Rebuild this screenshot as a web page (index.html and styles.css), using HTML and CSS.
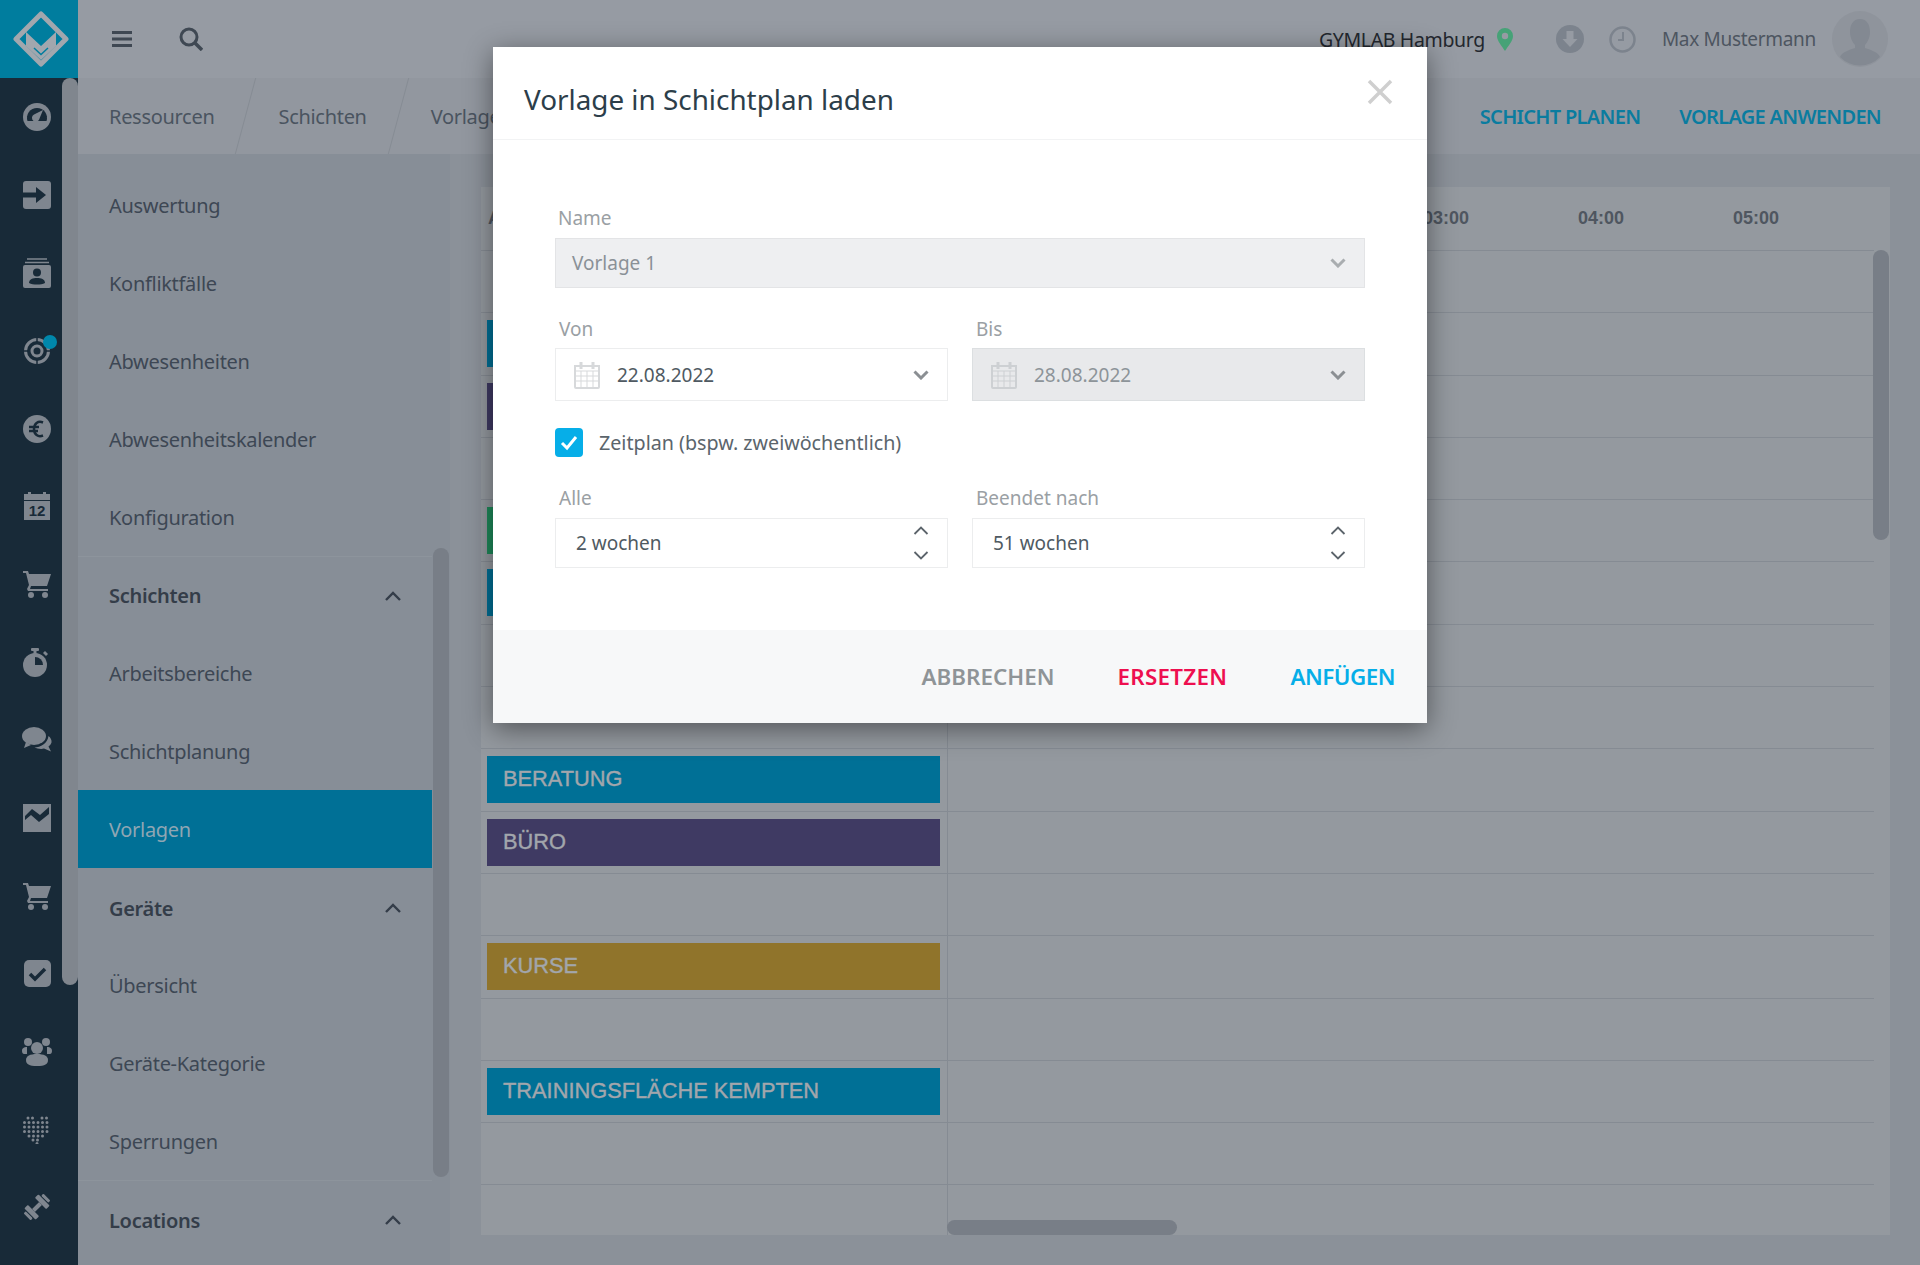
FILE: index.html
```html
<!DOCTYPE html>
<html lang="de">
<head>
    <meta charset="UTF-8">
    <title>Vorlagen</title>
    <link rel="stylesheet" href="styles.css">
</head>
<body>
<div class="app">
    <!-- Icon rail -->
    <nav class="rail">
        <div class="logo">
            <svg width="56" height="56" viewBox="0 0 56 56"><path d="M28 3 53 28 28 53 3 28Z" fill="none" stroke="#a2a7ae" stroke-width="5" stroke-linejoin="round"/><path d="M13 21 28 35 43 21V35L28 49 13 35Z" fill="#a2a7ae"/><path d="M21 37 28 43.5 35 37" fill="none" stroke="#007d9e" stroke-width="1.5"/></svg>
        </div>
        <div class="rail-thumb"></div>
        <div class="rail-item"><svg width="28" height="28" viewBox="0 0 28 28"><circle cx="14" cy="14" r="14" class="f"/><path d="M4.5 18a10 10 0 1 1 19 0Z" class="k"/><path d="M20 7l-3.500 8.500a3.800 3.800 0 1 1-5.500-4Z" class="f"/></svg></div>
        <div class="rail-item"><svg width="28" height="28" viewBox="0 0 28 28"><rect width="28" height="28" rx="3" class="f"/><path d="M0 11.500h13V6l10 8-10 8v-5.500H0Z" class="k"/></svg></div>
        <div class="rail-item"><svg width="28" height="30" viewBox="0 0 28 30"><path d="M4 1h20M2 4.500h24" stroke="#7f868f" stroke-width="1.5" fill="none"/><rect y="7" width="28" height="23" rx="2" class="f"/><circle cx="14" cy="14.5" r="4" class="k"/><path d="M6 25c0-4 4-5 8-5s8 1 8 5c-4 2-12 2-16 0Z" class="k"/></svg></div>
        <div class="rail-item"><svg width="28" height="28" viewBox="0 0 28 28"><circle cx="14" cy="14" r="11.5" fill="none" stroke="#7f868f" stroke-width="3"/><circle cx="14" cy="14" r="5" fill="none" stroke="#7f868f" stroke-width="3"/><path d="M0 14h5M23 14h5M14 0v5M14 23v5" stroke="#182a38" stroke-width="1.5"/></svg><span class="rail-dot"></span></div>
        <div class="rail-item"><svg width="28" height="28" viewBox="0 0 28 28"><circle cx="14" cy="14" r="14" class="f"/><path d="M20 7.500c-5-2-9 1-9 6.500s4 8.500 9 6.500M6 12h10M6 16h9" fill="none" class="d" stroke-width="2.5"/></svg></div>
        <div class="rail-item"><svg width="28" height="30" viewBox="0 0 28 30"><path d="M1 3h4V1h3v2h12V1h3v2h4v6H1Z" class="f"/><rect x="1" y="10" width="26" height="19" class="f"/><text x="14" y="25" class="cal-num">12</text></svg></div>
        <div class="rail-item"><svg width="30" height="30" viewBox="0 0 30 30"><path d="M1 2h5l1 3h22l-4 12H9l-1 3h18v2H6l-1-2 2-4L4 4H1Z" class="f"/><circle cx="9" cy="26" r="3" class="f"/><circle cx="23" cy="26" r="3" class="f"/></svg></div>
        <div class="rail-item"><svg width="28" height="30" viewBox="0 0 28 30"><circle cx="12" cy="18" r="12" class="f"/><rect x="8" y="1" width="8" height="3" rx="1" class="f"/><rect x="10.5" y="3" width="3" height="4" class="f"/><path d="m22 4 3 3-2 2-3-3Z" class="f"/><path d="M12 10v8h8a8 8 0 0 0-8-8Z" class="k"/></svg></div>
        <div class="rail-item"><svg width="30" height="26" viewBox="0 0 30 26"><ellipse cx="12" cy="9" rx="12" ry="9" class="f"/><path d="m4 15-2 6 7-3Z" class="f"/><path d="M26.500 9c2 1.500 3.500 4 3 6.500-.5 2-2 3-3 4l2.500 5-7-3c-3 1-7 0-9.500-1 6 0 13-4 14-11.500Z" class="f"/></svg></div>
        <div class="rail-item"><svg width="28" height="28" viewBox="0 0 28 28"><rect width="28" height="28" class="f"/><path d="M2 12v4l6-5 8 7 10-8V3l-9 8-8-6Z" class="k"/></svg></div>
        <div class="rail-item"><svg width="30" height="30" viewBox="0 0 30 30"><path d="M1 2h5l1 3h22l-4 12H9l-1 3h18v2H6l-1-2 2-4L4 4H1Z" class="f"/><circle cx="9" cy="26" r="3" class="f"/><circle cx="23" cy="26" r="3" class="f"/></svg></div>
        <div class="rail-item"><svg width="27" height="27" viewBox="0 0 27 27"><rect width="27" height="27" rx="5" class="f"/><path d="m6 14 5 5 10-10" fill="none" class="d" stroke-width="3.5"/></svg></div>
        <div class="rail-item"><svg width="30" height="28" viewBox="0 0 30 28"><circle cx="6" cy="4" r="4" class="f"/><circle cx="24" cy="4" r="4" class="f"/><path d="M0 13c0-3 2-4 5-4v7H2c-1 0-2-1-2-3ZM30 13c0-3-2-4-5-4v7h3c1 0 2-1 2-3Z" class="f"/><circle cx="15" cy="10" r="6" class="f"/><path d="M4 22c0-4 4-6 11-6s11 2 11 6c0 4-3 6-11 6S4 26 4 22Z" class="f"/></svg></div>
        <div class="rail-item"><svg width="28" height="28" viewBox="0 0 28 28"><g fill="none" stroke="#7f868f" stroke-width="3" stroke-linecap="round" stroke-dasharray="0 4.5"><path d="M5 2h6M19 2h6"/><path d="M1.5 6.500h25"/><path d="M1.5 11h25"/><path d="M1.5 15.500h25"/><path d="M6 20h16"/><path d="M10 24h8"/><path d="M14 27.500h1"/></g></svg></div>
        <div class="rail-item"><svg width="28" height="28" viewBox="0 0 28 28"><g transform="rotate(-45 14 14)"><rect x="9" y="12" width="10" height="4" class="f"/><rect x="4" y="6" width="5" height="16" rx="1" class="f"/><rect x="19" y="6" width="5" height="16" rx="1" class="f"/><rect x="0" y="9" width="3" height="10" rx="1" class="f"/><rect x="25" y="9" width="3" height="10" rx="1" class="f"/></g></svg></div>
    </nav>

    <div class="main">
        <header class="topbar">
            <div class="topbar-left">
                <svg width="20" height="16" viewBox="0 0 20 16"><path d="M0 1.500h20M0 8h20M0 14.500h20" stroke="#3f4853" stroke-width="3"/></svg>
                <svg width="24" height="24" viewBox="0 0 24 24"><circle cx="10" cy="10" r="8" fill="none" stroke="#3f4853" stroke-width="3"/><path d="m16 16 7 7" stroke="#3f4853" stroke-width="3.5"/></svg>
            </div>
            <div class="topbar-right">
                <span class="location">GYMLAB Hamburg</span>
                <svg class="pin" width="16" height="23" viewBox="0 0 16 23"><path d="M8 0a8 8 0 0 1 8 8c0 5-5 10-8 15C5 18 0 13 0 8a8 8 0 0 1 8-8Z" fill="#46a277"/><circle cx="8" cy="8" r="3.2" fill="#969ba3"/></svg>
                <svg class="ic-download" width="28" height="28" viewBox="0 0 28 28"><circle cx="14" cy="14" r="14" fill="#7c838d"/><path d="M10.500 6h7v8h4L14 22l-7.500-8h4Z" fill="#969ba3"/></svg>
                <svg class="ic-clock" width="27" height="27" viewBox="0 0 27 27"><circle cx="13.5" cy="13.5" r="12" fill="none" stroke="#7c838d" stroke-width="2.5"/><path d="M14 6v8H9" fill="none" stroke="#7c838d" stroke-width="2"/></svg>
                <span class="user-name">Max Mustermann</span>
                <svg class="avatar" width="56" height="56" viewBox="0 0 56 56"><circle cx="28" cy="28" r="28" fill="#8f949c"/><path d="M28 8c7 0 10 6 10 13 0 6-3 11-5 13v3c6 2 13 4 15 9a28 28 0 0 1-40 0c2-5 9-7 15-9v-3c-2-2-5-7-5-13 0-7 3-13 10-13Z" fill="#838992"/></svg>
            </div>
        </header>

        <div class="subbar">
            <div class="crumbs">
                <a class="crumb">Ressourcen</a>
                <a class="crumb">Schichten</a>
                <a class="crumb">Vorlagen</a>
            </div>
            <div class="actions">
                <a>SCHICHT PLANEN</a>
                <a>VORLAGE ANWENDEN</a>
            </div>
        </div>

        <div class="workspace">
            <aside class="sidebar">
                <div class="side-thumb"></div>
                <a class="side-item">Auswertung</a>
                <a class="side-item">Konfliktfälle</a>
                <a class="side-item">Abwesenheiten</a>
                <a class="side-item">Abwesenheitskalender</a>
                <a class="side-item">Konfiguration</a>
                <div class="side-group">
                    <div class="side-head">Schichten <svg width="16" height="10" viewBox="0 0 16 10"><path d="M1 9l7-7 7 7" class="chev"/></svg></div>
                    <a class="side-item">Arbeitsbereiche</a>
                    <a class="side-item">Schichtplanung</a>
                    <a class="side-item active">Vorlagen</a>
                </div>
                <div class="side-group plain">
                    <div class="side-head">Geräte <svg width="16" height="10" viewBox="0 0 16 10"><path d="M1 9l7-7 7 7" class="chev"/></svg></div>
                    <a class="side-item">Übersicht</a>
                    <a class="side-item">Geräte-Kategorie</a>
                    <a class="side-item">Sperrungen</a>
                </div>
                <div class="side-group">
                    <div class="side-head">Locations <svg width="16" height="10" viewBox="0 0 16 10"><path d="M1 9l7-7 7 7" class="chev"/></svg></div>
                </div>
            </aside>

            <section class="content">
                <div class="plan">
                    <div class="plan-head">
                        <div class="plan-name">Arbeitsbereiche</div>
                        <div class="plan-times">
                            <span>00:00</span><span>01:00</span><span>02:00</span><span>03:00</span><span>04:00</span><span>05:00</span>
                        </div>
                    </div>
                    <div class="row"><div class="row-name"></div></div>
                    <div class="row"><div class="row-name"><div class="bar blue"></div></div></div>
                    <div class="row"><div class="row-name"><div class="bar purple"></div></div></div>
                    <div class="row"><div class="row-name"></div></div>
                    <div class="row"><div class="row-name"><div class="bar green"></div></div></div>
                    <div class="row"><div class="row-name"><div class="bar blue"></div></div></div>
                    <div class="row"><div class="row-name"></div></div>
                    <div class="row"><div class="row-name"></div></div>
                    <div class="row"><div class="row-name"><div class="bar blue">BERATUNG</div></div></div>
                    <div class="row"><div class="row-name"><div class="bar purple">BÜRO</div></div></div>
                    <div class="row"><div class="row-name"></div></div>
                    <div class="row"><div class="row-name"><div class="bar gold">KURSE</div></div></div>
                    <div class="row"><div class="row-name"></div></div>
                    <div class="row"><div class="row-name"><div class="bar blue">TRAININGSFLÄCHE KEMPTEN</div></div></div>
                    <div class="row"><div class="row-name"></div></div>
                    <div class="row"><div class="row-name"></div></div>
                    <div class="plan-vthumb"></div>
                    <div class="plan-hthumb"></div>
                </div>
            </section>
        </div>
    </div>
</div>

<!-- Dialog -->
<div class="modal">
    <div class="modal-head">
        <h2>Vorlage in Schichtplan laden</h2>
        <svg width="26" height="26" viewBox="0 0 26 26"><path d="M2 2l22 22M24 2 2 24" stroke="#cfcfcf" stroke-width="3.5"/></svg>
    </div>
    <div class="modal-body">
        <label class="label">Name</label>
        <div class="input locked name-input">
            <span>Vorlage 1</span>
            <svg width="16" height="10" viewBox="0 0 16 10"><path d="M1.5 1.500 8 8l6.500-6.500" class="sel-chev light"/></svg>
        </div>
        <div class="two-col dates">
            <div>
                <label class="label short">Von</label>
                <div class="input date">
                    <svg class="cal" width="26" height="28" viewBox="0 0 26 28"><use href="#cal-icon"/></svg>
                    <span class="date-text">22.08.2022</span>
                    <svg width="16" height="10" viewBox="0 0 16 10"><path d="M1.5 1.500 8 8l6.500-6.500" class="sel-chev"/></svg>
                </div>
            </div>
            <div>
                <label class="label short">Bis</label>
                <div class="input date disabled">
                    <svg class="cal" width="26" height="28" viewBox="0 0 26 28"><use href="#cal-icon"/></svg>
                    <span class="date-text">28.08.2022</span>
                    <svg width="16" height="10" viewBox="0 0 16 10"><path d="M1.5 1.500 8 8l6.500-6.500" class="sel-chev"/></svg>
                </div>
            </div>
        </div>
        <div class="check-row">
            <span class="check"><svg width="18" height="16" viewBox="0 0 18 16"><path d="M2 8l5 5 9-11" fill="none" stroke="#fff" stroke-width="3"/></svg></span>
            <span>Zeitplan (bspw. zweiwöchentlich)</span>
        </div>
        <div class="two-col">
            <div>
                <label class="label wide">Alle</label>
                <div class="input spin">
                    <span>2 wochen</span>
                    <svg width="16" height="34" viewBox="0 0 16 34"><path d="M1.5 8 8 1.500 14.500 8M1.500 26 8 32.500 14.500 26" fill="none" stroke="#5c646b" stroke-width="1.8"/></svg>
                </div>
            </div>
            <div>
                <label class="label wide">Beendet nach</label>
                <div class="input spin">
                    <span>51 wochen</span>
                    <svg width="16" height="34" viewBox="0 0 16 34"><path d="M1.5 8 8 1.500 14.500 8M1.500 26 8 32.500 14.500 26" fill="none" stroke="#5c646b" stroke-width="1.8"/></svg>
                </div>
            </div>
        </div>
    </div>
    <div class="modal-foot">
        <a class="btn-cancel">ABBRECHEN</a>
        <a class="btn-replace">ERSETZEN</a>
        <a class="btn-append">ANFÜGEN</a>
    </div>
</div>

<svg class="defs" width="0" height="0">
    <symbol id="cal-icon" viewBox="0 0 26 28">
        <path d="M1 5h24v21a1 1 0 0 1-1 1H2a1 1 0 0 1-1-1Z" fill="none" stroke="currentColor" stroke-width="2"/>
        <path d="M1 10h24M1 15h24M1 20h24M7 10v17M13 10v17M19 10v17" stroke="currentColor" stroke-width="1"/>
        <path d="M7 1v7M19 1v7" stroke="currentColor" stroke-width="3"/>
    </symbol>
</svg>
</body>
</html>
```

FILE: styles.css
```css
* {
    box-sizing: border-box;
}
html, body {
    margin: 0;
    height: 100%;
}
body {
    font-family: "Noto Sans", sans-serif;
    font-size: 20px;
    color: #3d4754;
    overflow: hidden;
}
a {
    text-decoration: none;
}
.app {
    display: flex;
    height: 1265px;
    background-color: #8b9199;
}
.defs {
    position: absolute;
}

/* rail */
.rail {
    position: relative;
    width: 78px;
    flex-shrink: 0;
    background-color: #182a38;
}
.logo {
    display: flex;
    align-items: center;
    justify-content: center;
    height: 78px;
    padding-left: 4px;
    background-color: #007d9e;
}
.rail-thumb {
    position: absolute;
    left: 62px;
    top: 78px;
    width: 16px;
    height: 907px;
    background-color: #80868e;
    border-radius: 8px;
}
.rail-item {
    position: relative;
    display: flex;
    align-items: center;
    justify-content: center;
    width: 74px;
    height: 77.9px;
}
.rail-dot {
    position: absolute;
    left: 43px;
    top: 23px;
    width: 14px;
    height: 14px;
    border-radius: 50%;
    background-color: #0087ab;
}
.f {
    fill: #7f868f;
}
.k {
    fill: #182a38;
}
.d {
    stroke: #182a38;
}
.cal-num {
    font-family: "Liberation Sans", sans-serif;
    font-size: 15px;
    font-weight: bold;
    text-anchor: middle;
    fill: #182a38;
}

.main {
    flex: 1;
    min-width: 0;
    display: flex;
    flex-direction: column;
}

/* topbar */
.topbar {
    height: 78px;
    flex-shrink: 0;
    display: flex;
    align-items: center;
    justify-content: space-between;
    padding: 0 32px 0 34px;
    background-color: #969ba3;
}
.topbar-left {
    display: flex;
    align-items: center;
    gap: 47px;
}
.topbar-right {
    display: flex;
    align-items: center;
}
.location {
    color: #23272e;
    font-size: 19.5px;
    letter-spacing: -.35px;
    margin-right: 12px;
}
.pin {
    margin-right: 43px;
}
.ic-download {
    margin-right: 25px;
}
.ic-clock {
    margin-right: 26px;
}
.user-name {
    color: #4d5560;
    font-size: 19px;
    letter-spacing: -.3px;
    margin-right: 16px;
}

/* subbar */
.subbar {
    height: 76px;
    flex-shrink: 0;
    display: flex;
    align-items: center;
    justify-content: space-between;
    padding: 0 39px 0 31px;
    background-color: #92979f;
}
.crumbs {
    display: flex;
    height: 100%;
}
.crumb {
    display: flex;
    align-items: center;
    position: relative;
    padding-right: 64px;
    color: #4a5460;
    letter-spacing: -.3px;
}
.crumb + .crumb::before {
    content: "";
    position: absolute;
    left: -33px;
    top: 0;
    height: 76px;
    width: 1px;
    background-color: #868c94;
    transform: skewX(-15deg);
}
.actions {
    display: flex;
    gap: 39px;
    color: #0a7c9f;
    font-weight: 600;
    letter-spacing: -.7px;
}

/* sidebar */
.workspace {
    flex: 1;
    display: flex;
    min-height: 0;
}
.sidebar {
    position: relative;
    width: 372px;
    flex-shrink: 0;
    padding-top: 13px;
    padding-right: 18px;
    background-color: #878e97;
}
.side-thumb {
    position: absolute;
    right: 1px;
    top: 394px;
    width: 16px;
    height: 629px;
    border-radius: 8px;
    background-color: #787e87;
}
.side-item {
    display: flex;
    align-items: center;
    height: 77.8px;
    padding-left: 31px;
    color: #3d4754;
    letter-spacing: -.3px;
}
.side-item.active {
    background-color: #007096;
    color: #8fa6b3;
}
.side-group {
    border-top: 1px solid #8d949c;
}
.side-group.plain {
    border-top: none;
    padding-top: 1px;
}
.side-head {
    display: flex;
    align-items: center;
    justify-content: space-between;
    height: 77.8px;
    padding: 0 31px;
    font-weight: 600;
    color: #343d49;
    letter-spacing: -.3px;
}
.chev {
    fill: none;
    stroke: #343d49;
    stroke-width: 2.4;
}

/* plan */
.content {
    flex: 1;
    min-width: 0;
    padding: 33px 30px 0 31px;
}
.plan {
    position: relative;
    height: 1048px;
    overflow: hidden;
    background-color: #94999f;
    font-family: "Liberation Sans", sans-serif;
}
.plan-head {
    display: flex;
    height: 64px;
    align-items: center;
    margin-right: 16px;
    border-bottom: 1px solid #858b93;
    font-weight: bold;
    font-size: 18px;
    color: #4f5660;
}
.plan-name {
    width: 466px;
    flex-shrink: 0;
    padding-left: 7px;
}
.plan-times {
    display: flex;
    padding-left: 11px;
}
.plan-times span {
    width: 155px;
    flex-shrink: 0;
}
.row {
    height: 62.3px;
    margin-right: 16px;
    border-bottom: 1px solid #858b93;
}
.row-name {
    width: 467px;
    height: 100%;
    padding: 7px 7px 0 6px;
    border-right: 1px solid #858b93;
}
.bar {
    height: 47px;
    line-height: 45px;
    padding-left: 16px;
    font-size: 21.8px;
    color: #a2a6ac;
    -webkit-text-stroke: .4px #a2a6ac;
}
.blue {
    background-color: #007096;
}
.purple {
    background-color: #3f3a63;
}
.gold {
    background-color: #90742b;
}
.green {
    background-color: #1e8a5a;
}
.plan-vthumb {
    position: absolute;
    right: 1px;
    top: 63px;
    width: 16px;
    height: 290px;
    border-radius: 8px;
    background-color: #787e87;
}
.plan-hthumb {
    position: absolute;
    left: 466px;
    bottom: 0;
    width: 230px;
    height: 15px;
    border-radius: 8px;
    background-color: #787e87;
}

/* dialog */
.modal {
    position: absolute;
    left: 493px;
    top: 47px;
    width: 934px;
    height: 676px;
    display: flex;
    flex-direction: column;
    background-color: #fff;
    box-shadow: 0 6px 26px rgba(0, 0, 0, .45);
}
.modal-head {
    height: 93px;
    flex-shrink: 0;
    display: flex;
    align-items: center;
    justify-content: space-between;
    padding: 0 34px 0 31px;
    border-bottom: 1px solid #f2f3f4;
}
.modal-head h2 {
    margin: 0 0 -11px;
    font-size: 27.85px;
    font-weight: 400;
    color: #2c3e4a;
}
.modal-head svg {
    margin-top: -2px;
}
.modal-body {
    flex: 1;
    padding: 66px 62px 0;
}
.label {
    display: block;
    height: 32px;
    line-height: 24px;
    padding-left: 3px;
    color: #9aa0a4;
    font-size: 19px;
}
.label.short {
    height: 31px;
    padding-left: 4px;
}
.label.wide {
    padding-left: 4px;
}
.input {
    display: flex;
    align-items: center;
    justify-content: space-between;
    height: 50px;
    padding: 0 18px 0 20px;
    border: 1px solid #ecedee;
    color: #4f5a62;
    font-size: 19px;
}
.locked {
    background-color: #eeeff1;
    border-color: #e3e4e6;
    color: #8a9197;
    padding-left: 16px;
}
.two-col {
    display: grid;
    grid-template-columns: 393px 393px;
    gap: 24px;
}
.dates {
    margin-top: 29px;
}
.date {
    height: 53px;
    padding-left: 18px;
}
.date .cal {
    color: #d7d9db;
    margin-right: 17px;
}
.date-text {
    flex: 1;
}
.disabled {
    background-color: #e8e9eb;
    border-color: #dcdfe1;
    color: #8d9499;
}
.disabled .cal {
    color: #cdd0d3;
}
.sel-chev {
    fill: none;
    stroke: #8b8f93;
    stroke-width: 3;
}
.sel-chev.light {
    stroke: #a9adb0;
}
.check-row {
    display: flex;
    align-items: center;
    gap: 16px;
    height: 29px;
    margin: 27px 0 29px;
    color: #5b656c;
    font-size: 19.7px;
}
.check {
    display: flex;
    align-items: center;
    justify-content: center;
    width: 28px;
    height: 29px;
    border-radius: 4px;
    background-color: #06aee8;
}
.spin {
    height: 50px;
}
.modal-foot {
    height: 93px;
    flex-shrink: 0;
    display: flex;
    align-items: center;
    justify-content: flex-end;
    gap: 63px;
    padding-right: 32px;
    background-color: #f7f8f9;
    font-size: 22.4px;
    font-weight: 600;
}
.btn-cancel {
    color: #8f9497;
}
.btn-replace {
    color: #ee0f4f;
    letter-spacing: .3px;
}
.btn-append {
    color: #06aee8;
    letter-spacing: -.5px;
}
```
